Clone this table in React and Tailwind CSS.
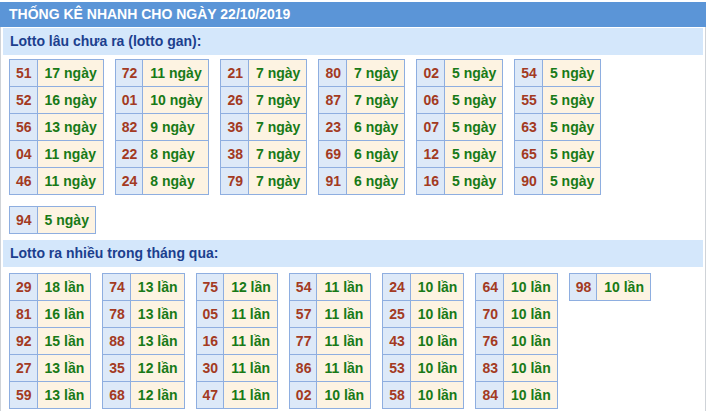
const ganTables = [
  [["51", "17"], ["52", "16"], ["56", "13"], ["04", "11"], ["46", "11"]],
  [["72", "11"], ["01", "10"], ["82", "9"], ["22", "8"], ["24", "8"]],
  [["21", "7"], ["26", "7"], ["36", "7"], ["38", "7"], ["79", "7"]],
  [["80", "7"], ["87", "7"], ["23", "6"], ["69", "6"], ["91", "6"]],
  [["02", "5"], ["06", "5"], ["07", "5"], ["12", "5"], ["16", "5"]],
  [["54", "5"], ["55", "5"], ["63", "5"], ["65", "5"], ["90", "5"]],
];

const ganExtra = [["94", "5"]];

const hotTables = [
  [["29", "18"], ["81", "16"], ["92", "15"], ["27", "13"], ["59", "13"]],
  [["74", "13"], ["78", "13"], ["88", "13"], ["35", "12"], ["68", "12"]],
  [["75", "12"], ["05", "11"], ["16", "11"], ["30", "11"], ["47", "11"]],
  [["54", "11"], ["57", "11"], ["77", "11"], ["86", "11"], ["02", "10"]],
  [["24", "10"], ["25", "10"], ["43", "10"], ["53", "10"], ["58", "10"]],
  [["64", "10"], ["70", "10"], ["76", "10"], ["83", "10"], ["84", "10"]],
  [["98", "10"]],
];

function LottoTable({ rows, unit }) {
  return (
    <table className="border-collapse mb-[11px]">
      <tbody>
        {rows.map(([num, val], i) => (
          <tr key={i}>
            <td className="h-[27px] p-0 pl-[6px] pr-[5px] border border-[#8eaee0] bg-[#dde9f8] text-[#a33a22] text-center">
              {num}
            </td>
            <td className="h-[27px] p-0 pl-[7px] pr-[6px] border border-[#8eaee0] bg-[#fdf3e2] text-[#187a17] whitespace-nowrap">
              {val} {unit}
            </td>
          </tr>
        ))}
      </tbody>
    </table>
  );
}

function SubHeader({ children }) {
  return (
    <div className="h-[27px] bg-[#d4e7fb] text-[#1c3f8e] text-[14px] font-bold pl-[7px] flex items-center">
      {children}
    </div>
  );
}

export default function App() {
  return (
    <div className="w-[709px] h-[411px] bg-white overflow-hidden font-['Liberation_Sans',Arial,sans-serif]">
      <div className="pt-[2px] w-[706px]">
        <div className="h-[25px] bg-[#5b95d7] text-white text-[14px] font-bold pl-[9px] flex items-center">
          THỐNG KÊ NHANH CHO NGÀY 22/10/2019
        </div>
        <div className="border-x border-[#cfd3d8] px-[2px] pt-[1px]">
          <SubHeader>Lotto lâu chưa ra (lotto gan):</SubHeader>
          <div className="flex flex-wrap items-start gap-x-[11px] pl-[6px] pt-[4px] text-[14px] font-bold">
            {ganTables.map((rows, i) => (
              <LottoTable key={i} rows={rows} unit="ngày" />
            ))}
            <div className="w-full h-0" />
            <LottoTable rows={ganExtra} unit="ngày" />
          </div>
          <div className="mt-[-5px]">
            <SubHeader>Lotto ra nhiều trong tháng qua:</SubHeader>
          </div>
          <div className="flex flex-wrap items-start gap-x-[11px] pl-[6px] pt-[6px] text-[14px] font-bold">
            {hotTables.map((rows, i) => (
              <LottoTable key={i} rows={rows} unit="lần" />
            ))}
          </div>
        </div>
      </div>
    </div>
  );
}
